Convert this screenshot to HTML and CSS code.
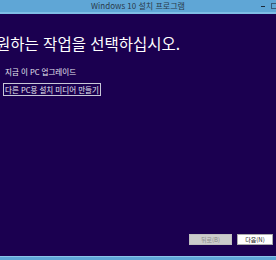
FILE: index.html
```html
<!DOCTYPE html>
<html lang="ko">
<head>
    <meta charset="UTF-8">
    <title>Windows 10 설치 프로그램</title>
    <link rel="stylesheet" href="styles.css">
</head>
<body>
    <div class="window">
        <div class="titlebar">
            <span class="title">Windows 10 설치 프로그램</span>
            <div class="caption-buttons">
                <span class="min"></span>
                <span class="max"></span>
            </div>
        </div>

        <div class="content">
            <h1>원하는 작업을 선택하십시오.</h1>

            <ul class="options">
                <li>지금 이 PC 업그레이드</li>
                <li class="selected">다른 PC용 설치 미디어 만들기</li>
            </ul>

            <div class="footer">
                <button class="btn" disabled>뒤로(B)</button>
                <button class="btn">다음(N)</button>
            </div>
        </div>

        <div class="bottom-bar"></div>
    </div>
</body>
</html>
```

FILE: styles.css
```css
body {
    margin: 0;
    padding: 0;
    font-family: 'Noto Sans CJK KR', 'Noto Sans', sans-serif;
    background-color: #1b0050;
    overflow: hidden;
}
.window {
    width: 276px;
    height: 260px;
    display: flex;
    flex-direction: column;
}
.titlebar {
    height: 12px;
    background-color: #5fa6d6;
    border-bottom: 2px solid #7fbde6;
    position: relative;
    display: flex;
    justify-content: center;
    align-items: center;
}
.title {
    font-size: 8px;
    color: #2a3a4a;
    line-height: 12px;
}
.caption-buttons {
    position: absolute;
    right: 0;
    top: 0;
    display: flex;
    gap: 6px;
    align-items: center;
    height: 12px;
}
.caption-buttons .min {
    width: 4px;
    height: 1px;
    background-color: #1a2a3a;
}
.caption-buttons .max {
    width: 4px;
    height: 4px;
    border: 1px solid #3a5a78;
    border-right: none;
}
.content {
    flex: 1;
    display: flex;
    flex-direction: column;
    color: #fff;
}
h1 {
    margin: 18px 0 0 -4px;
    font-size: 15.5px;
    font-weight: normal;
    line-height: 22px;
    white-space: nowrap;
}
.options {
    list-style: none;
    margin: 11px 0 0 3px;
    padding: 0;
    font-size: 7.5px;
    color: #e8e8f0;
}
.options li {
    width: fit-content;
    padding: 1px 1px;
    border: 1px solid transparent;
    margin-bottom: 5px;
    white-space: nowrap;
    line-height: 9px;
}
.options li.selected {
    border-color: #c8c8d8;
}
.footer {
    margin-top: auto;
    display: flex;
    justify-content: flex-end;
    gap: 5px;
    padding: 0 3px 11px 0;
}
.btn {
    width: 43px;
    height: 11px;
    padding: 0;
    font-family: inherit;
    font-size: 6px;
    line-height: 9px;
    background-color: #ffffff;
    color: #1a1a1a;
    border: 1px solid #adadad;
}
.btn:disabled {
    background-color: #cccccc;
    color: #8a8a8a;
    border-color: #bfbfbf;
}
.btn + .btn {
    width: 36px;
}
.bottom-bar {
    height: 3px;
    background-color: #5fa6d6;
    border-top: 1px solid #8ac4ea;
}
```
